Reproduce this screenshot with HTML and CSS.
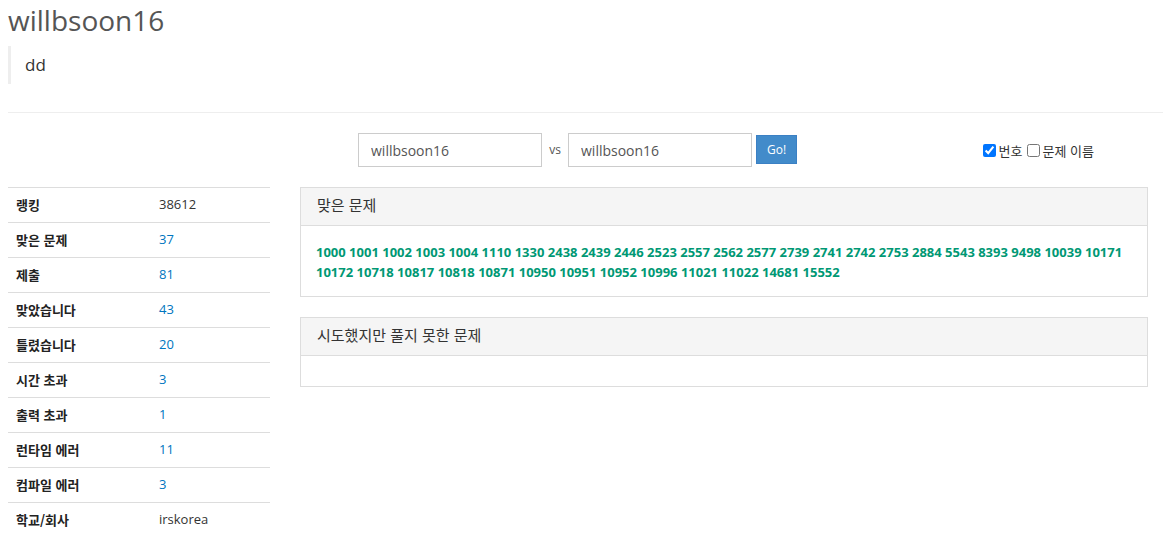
FILE: index.html
```html
<!DOCTYPE html>
<html lang="ko">
<head>
<meta charset="utf-8">
<link rel="stylesheet" href="styles.css">
</head>
<body>
<div class="page">
  <h1 class="title">willbsoon16</h1>
  <blockquote class="quote">dd</blockquote>
  <hr class="rule">
  <div class="compare">
    <div class="compare-form">
      <input class="field" type="text" value="willbsoon16">
      <span class="vs">vs</span>
      <input class="field" type="text" value="willbsoon16">
      <button class="go">Go!</button>
    </div>
    <div class="opts">
      <label class="opt"><input type="checkbox" checked>번호</label>
      <label class="opt"><input type="checkbox">문제 이름</label>
    </div>
  </div>
  <div class="main">
    <table class="stats">
      <tr><th>랭킹</th><td>38612</td></tr>
      <tr><th>맞은 문제</th><td><a>37</a></td></tr>
      <tr><th>제출</th><td><a>81</a></td></tr>
      <tr><th>맞았습니다</th><td><a>43</a></td></tr>
      <tr><th>틀렸습니다</th><td><a>20</a></td></tr>
      <tr><th>시간 초과</th><td><a>3</a></td></tr>
      <tr><th>출력 초과</th><td><a>1</a></td></tr>
      <tr><th>런타임 에러</th><td><a>11</a></td></tr>
      <tr><th>컴파일 에러</th><td><a>3</a></td></tr>
      <tr><th>학교/회사</th><td>irskorea</td></tr>
    </table>
    <div class="panels">
      <div class="panel">
        <div class="panel-head">맞은 문제</div>
        <div class="panel-body problems">1000 1001 1002 1003 1004 1110 1330 2438 2439 2446 2523 2557 2562 2577 2739 2741 2742 2753 2884 5543 8393 9498 10039 10171 10172 10718 10817 10818 10871 10950 10951 10952 10996 11021 11022 14681 15552</div>
      </div>
      <div class="panel">
        <div class="panel-head">시도했지만 풀지 못한 문제</div>
        <div class="panel-body"></div>
      </div>
    </div>
  </div>
</div>
</body>
</html>
```
FILE: styles.css
```css
html, body {
  margin: 0;
  padding: 0;
  background: #fff;
}
body {
  font-family: "Open Sans", "Noto Sans CJK KR", sans-serif;
  font-size: 13px;
  color: #333;
}
.page {
  padding: 0 8px;
}
.title {
  margin: 0;
  padding-top: 2px;
  font-size: 28px;
  font-weight: 400;
  line-height: 36px;
  color: #555;
  height: 42px;
}
.quote {
  margin: 2px 0 0 0;
  padding: 7px 14px;
  border-left: 3px solid #eee;
  font-size: 17px;
  line-height: 24px;
  height: 24px;
}
.rule {
  margin: 28px 0 0 0;
  border: 0;
  border-top: 1px solid #eee;
  height: 0;
}
.compare {
  display: flex;
  align-items: center;
  margin-top: 20px;
  height: 34px;
}
.compare-form {
  display: flex;
  align-items: center;
  margin-left: 350px;
}
.field {
  box-sizing: border-box;
  width: 184px;
  height: 34px;
  border: 1px solid #ccc;
  padding: 0 12px;
  font-family: "Open Sans", sans-serif;
  font-size: 14px;
  color: #555;
  outline: none;
}
.vs {
  width: 26px;
  text-align: center;
  font-size: 12px;
  color: #555;
  margin-top: -2px;
}
.go {
  margin-left: 4px;
  height: 29px;
  width: 41px;
  border: 1px solid #3b80c4;
  background: #428bca;
  color: #fff;
  font-family: "Open Sans", sans-serif;
  font-size: 12px;
  padding: 0;
  margin-top: -1px;
}
.opts {
  display: flex;
  align-items: center;
  margin-left: auto;
  margin-right: 69px;
}
.opt {
  display: flex;
  align-items: center;
  font-family: "Noto Sans CJK KR", sans-serif;
  font-size: 13px;
  color: #333;
}
.opt input {
  margin: 0 3px 0 0;
  width: 13px;
  height: 13px;
}
.opt + .opt {
  margin-left: 4px;
}
.main {
  display: flex;
  align-items: flex-start;
  margin-top: 20px;
}
.stats {
  width: 262px;
  border-collapse: collapse;
  flex: none;
}
.stats th, .stats td {
  box-sizing: border-box;
  height: 35px;
  padding: 0 8px 2px;
  border-top: 1px solid #ddd;
  text-align: left;
  font-size: 13px;
  vertical-align: middle;
}
.stats th {
  width: 143px;
  font-family: "Noto Sans CJK KR", sans-serif;
  font-weight: 700;
  color: #222;
}
.stats td {
  font-family: "Open Sans", sans-serif;
  color: #333;
}
.stats a {
  color: #0076c0;
  text-decoration: none;
}
.panels {
  margin-left: 30px;
  width: 848px;
}
.panel {
  border: 1px solid #ddd;
  margin-bottom: 20px;
}
.panel-head {
  background: #f5f5f5;
  border-bottom: 1px solid #ddd;
  padding: 0 16px 3px;
  height: 34px;
  line-height: 34px;
  font-family: "Noto Sans CJK KR", sans-serif;
  font-size: 15px;
  color: #333;
}
.panel-body {
  padding: 15px 16px;
}
.problems {
  padding: 16px 15px 14px;
  font-size: 13px;
  font-weight: 700;
  line-height: 20px;
  color: #009874;
}
```
